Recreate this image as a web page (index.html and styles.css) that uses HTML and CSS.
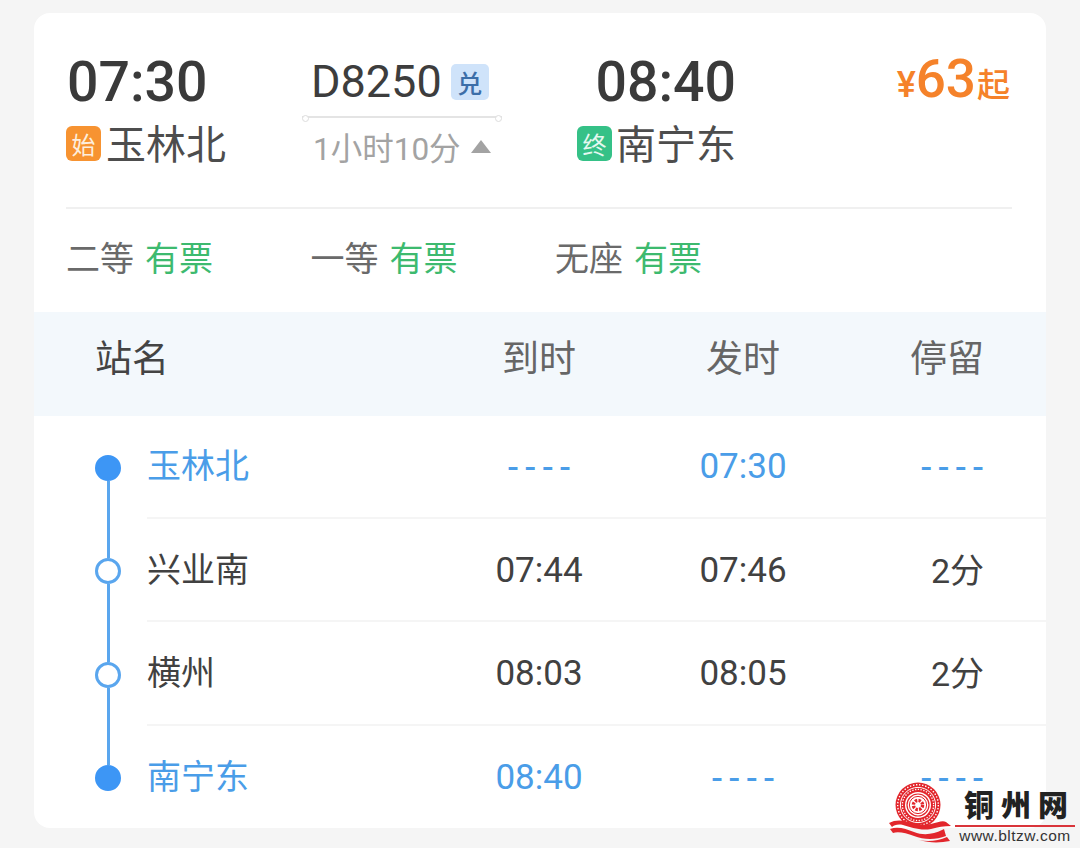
FILE: index.html
```html
<!DOCTYPE html>
<html lang="zh">
<head>
<meta charset="utf-8">
<title>D8250</title>
<link rel="stylesheet" href="styles.css">
</head>
<body>
<main class="card">
  <section class="summary">
    <div class="journey">
      <div class="stop">
        <div class="clock">07:30</div>
        <div class="station"><span class="tag tag-start">始</span>玉林北</div>
      </div>
      <div class="train">
        <div class="train-id"><span class="train-no">D8250</span><span class="exchange">兑</span></div>
        <div class="train-line"></div>
        <div class="duration">1小时10分<span class="caret"></span></div>
      </div>
      <div class="stop stop-end">
        <div class="clock">08:40</div>
        <div class="station"><span class="tag tag-end">终</span>南宁东</div>
      </div>
      <div class="price"><span class="yen">¥</span><span class="amount">63</span><span class="from">起</span></div>
    </div>
    <div class="tickets">
      <div class="ticket">二等<span class="avail">有票</span></div>
      <div class="ticket">一等<span class="avail">有票</span></div>
      <div class="ticket">无座<span class="avail">有票</span></div>
    </div>
  </section>
  <div class="thead">
    <div class="th-name">站名</div>
    <div class="th">到时</div>
    <div class="th">发时</div>
    <div class="th th-last">停留</div>
  </div>
  <section class="stops">
    <div class="row is-key">
      <div class="rail rail-first"><i class="seg"></i><b class="dot"></b><i class="seg"></i></div>
      <div class="cells">
        <div class="name">玉林北</div><div class="cell dash">----</div><div class="cell">07:30</div><div class="cell cell-last dash">----</div>
      </div>
    </div>
    <div class="row">
      <div class="rail"><i class="seg"></i><b class="dot"></b><i class="seg"></i></div>
      <div class="cells">
        <div class="name">兴业南</div><div class="cell">07:44</div><div class="cell">07:46</div><div class="cell cell-last">2分</div>
      </div>
    </div>
    <div class="row">
      <div class="rail"><i class="seg"></i><b class="dot"></b><i class="seg"></i></div>
      <div class="cells">
        <div class="name">横州</div><div class="cell">08:03</div><div class="cell">08:05</div><div class="cell cell-last">2分</div>
      </div>
    </div>
    <div class="row is-key is-last">
      <div class="rail rail-last"><i class="seg"></i><b class="dot"></b><i class="seg"></i></div>
      <div class="cells">
        <div class="name">南宁东</div><div class="cell">08:40</div><div class="cell dash">----</div><div class="cell cell-last dash">----</div>
      </div>
    </div>
  </section>
</main>
<aside class="mark">
  <svg class="mark-logo" width="70" height="64" viewBox="0 0 70 64" aria-hidden="true">
    <circle cx="32" cy="25" r="22.5" fill="#e2262c"/>
    <circle cx="32" cy="25" r="20.3" fill="none" stroke="#fff" stroke-width="1.4" stroke-dasharray="1.4 1.7"/>
    <circle cx="32" cy="25" r="17.6" fill="none" stroke="#fff" stroke-width="1"/>
    <circle cx="32" cy="25" r="15.6" fill="none" stroke="#fff" stroke-width="1.3" stroke-dasharray="1.3 1.5"/>
    <circle cx="32" cy="25" r="13" fill="#fff"/>
    <circle cx="32" cy="25" r="11" fill="none" stroke="#e2262c" stroke-width="1.2"/>
    <circle cx="32" cy="25" r="8.6" fill="none" stroke="#e2262c" stroke-width="1"/>
    <circle cx="32" cy="25" r="4.6" fill="none" stroke="#e2262c" stroke-width="3.4" stroke-dasharray="2.4 1.2"/>
    <path d="M3 43 C8 40 14 40 19 41 C27 43 36 46 45 44 C52 42 57 40 60 42 L65 46 C58 46 52 47 45 49 C34 51 25 47 17 45 C12 44 8 45 6 47Z" fill="#e2262c"/>
    <path d="M4 49 C12 46 20 49 28 52 C38 56 48 54 56 50 L58 49 L60 56 C50 60 38 60 28 56 C20 53 12 51 7 53Z" fill="#e2262c"/>
    <path d="M33 60 C42 62 52 61 61 57 L64 61 C54 63 43 63 33 60Z" fill="#e2262c"/>
  </svg>
  <div class="mark-text">
    <div class="mark-name">铜州网</div>
    <div class="mark-rule"></div>
    <div class="mark-url">www.bltzw.com</div>
  </div>
</aside>
</body>
</html>
```
FILE: styles.css
```css
* { box-sizing: border-box; }
html, body { margin: 0; height: 848px; overflow: hidden; }
body {
  background: #f5f5f5;
  padding: 13px 34px 0;
  font-family: Roboto, "Noto Sans CJK SC", sans-serif;
  position: relative;
}
.card {
  height: 815px;
  background: #fff;
  border-radius: 16px;
  overflow: hidden;
}
.summary { padding: 0 34px 0 32px; height: 299px; }
.journey {
  display: grid;
  grid-template-columns: 236px 200px 234px 1fr;
  height: 194px;
}
.stop { padding-top: 39px; }
.stop-end { display: flex; flex-direction: column; align-items: flex-end; }
.clock { font-size: 55.4px; line-height: 62px; font-weight: 500; color: #3a3a3a; margin-left: 1px; }
.station {
  display: flex;
  align-items: center;
  height: 48px;
  margin-top: 4px;
  font-size: 40px;
  color: #4d4d4d;
  font-family: "Noto Sans CJK SC", sans-serif;
}
.tag {
  width: 35px;
  height: 35px;
  margin: 2px 5px 0 0;
  border-radius: 6px;
  font-size: 24px;
  line-height: 35px;
  text-align: center;
  color: #fdeedd;
}
.tag-start { background: #f79331; }
.tag-end { background: #35c187; color: #e4f8ef; margin-right: 4px; }
.train { padding-top: 49px; }
.train-id { display: flex; align-items: center; height: 40px; padding-left: 9px; }
.train-no { font-size: 45px; line-height: 40px; color: #3d3d3d; }
.exchange {
  width: 38px;
  height: 36px;
  margin-left: 9px;
  border-radius: 5px;
  background: #cfe3fa;
  color: #3c6ea8;
  font-size: 25px;
  font-weight: 500;
  line-height: 36px;
  text-align: center;
  font-family: "Noto Sans CJK SC", sans-serif;
}
.train-line { position: relative; height: 2px; margin-top: 14px; background: #e4e4e4; }
.train-line::before, .train-line::after {
  content: "";
  position: absolute;
  top: -1px;
  width: 5px;
  height: 5px;
  margin-top: -0.5px;
  border: 1px solid #ddd;
  border-radius: 50%;
  background: #fff;
}
.train-line::before { left: 0; }
.train-line::after { right: 0; }
.duration {
  display: flex;
  align-items: center;
  height: 40px;
  margin-top: 8px;
  padding-left: 11px;
  font-size: 31.5px;
  color: #a3a3a3;
}
.caret {
  width: 0;
  height: 0;
  margin-left: 10px;
  border-left: 10px solid transparent;
  border-right: 10px solid transparent;
  border-bottom: 13px solid #a3a3a3;
}
.price { display: flex; justify-content: flex-end; align-items: baseline; padding: 28px 2px 0 0; height: 80px; color: #f5822a; font-weight: 500; line-height: 76px; }
.yen { font-size: 36px; }
.amount { font-size: 53px; }
.from { font-size: 33px; font-family: "Noto Sans CJK SC", sans-serif; margin-left: 1px; }
.tickets {
  display: grid;
  grid-template-columns: 244.5px 244.5px 1fr;
  align-items: center;
  height: 105px;
  border-top: 2px solid #f0f0f0;
  padding-bottom: 8px;
}
.ticket { font-size: 34px; color: #6a6a6a; font-family: "Noto Sans CJK SC", sans-serif; line-height: 48px; }
.avail { margin-left: 11px; color: #3dba6f; }
.thead {
  display: grid;
  grid-template-columns: 403px 204px 204px 1fr;
  align-items: center;
  height: 104px;
  padding-bottom: 16px;
  background: #f3f8fc;
  font-family: "Noto Sans CJK SC", sans-serif;
  font-size: 37px;
  color: #666;
}
.th-name { padding-left: 61px; color: #444; }
.th { text-align: center; }
.th-last { text-align: right; padding-right: 62px; }
.row { display: flex; height: 103.5px; }
.rail {
  flex: 0 0 113px;
  display: flex;
  flex-direction: column;
  align-items: center;
  padding-left: 35px;
}
.seg { flex: 1; width: 3px; background: #5aa6ee; }
.dot { flex: none; width: 26px; height: 26px; border: 3px solid #5aa6ee; border-radius: 50%; background: #fff; }
.is-key .dot { background: #3d96f5; border-color: #3d96f5; }
.rail-first .seg:first-child, .rail-last .seg:last-child { background: transparent; }
.cells {
  flex: 1;
  display: grid;
  grid-template-columns: 290px 204px 204px 1fr;
  align-items: center;
  margin-bottom: 1px;
  padding-bottom: 2px;
  border-bottom: 2px solid #f5f5f5;
  font-size: 35px;
  color: #414141;
}
.is-last .cells { border-bottom-color: transparent; }
.is-key .cells { color: #4a9de8; }
.name { font-family: "Noto Sans CJK SC", sans-serif; font-size: 34px; line-height: 48px; margin-bottom: 2px; }
.cell { text-align: center; line-height: 48px; margin-top: 4px; }
.cell-last { text-align: right; padding-right: 62px; font-size: 34px; }
.dash {
  font-family: "Liberation Sans", sans-serif;
  font-size: 36px;
  line-height: 18px;
  letter-spacing: 5.3px;
  padding-left: 5.3px;
  margin-top: 2px;
}
.cell-last.dash { padding-right: 56.7px; }
.mark {
  position: absolute;
  left: 886px;
  top: 780px;
  display: flex;
  width: 194px;
  height: 68px;
}
.mark-logo { flex: none; }
.mark-text { margin-left: -1px; width: 120px; }
.mark-name {
  font-family: "Noto Sans CJK SC", sans-serif;
  font-size: 30px;
  font-weight: 900;
  letter-spacing: 7px;
  line-height: 30px;
  color: #222;
  padding: 8px 0 7px 9px;
  white-space: nowrap;
}
.mark-rule { height: 2px; background: #d9343a; }
.mark-url {
  font-family: "Liberation Sans", sans-serif;
  font-size: 15.5px;
  letter-spacing: 0.5px;
  line-height: 18px;
  color: #333;
  text-align: center;
  white-space: nowrap;
}
```
